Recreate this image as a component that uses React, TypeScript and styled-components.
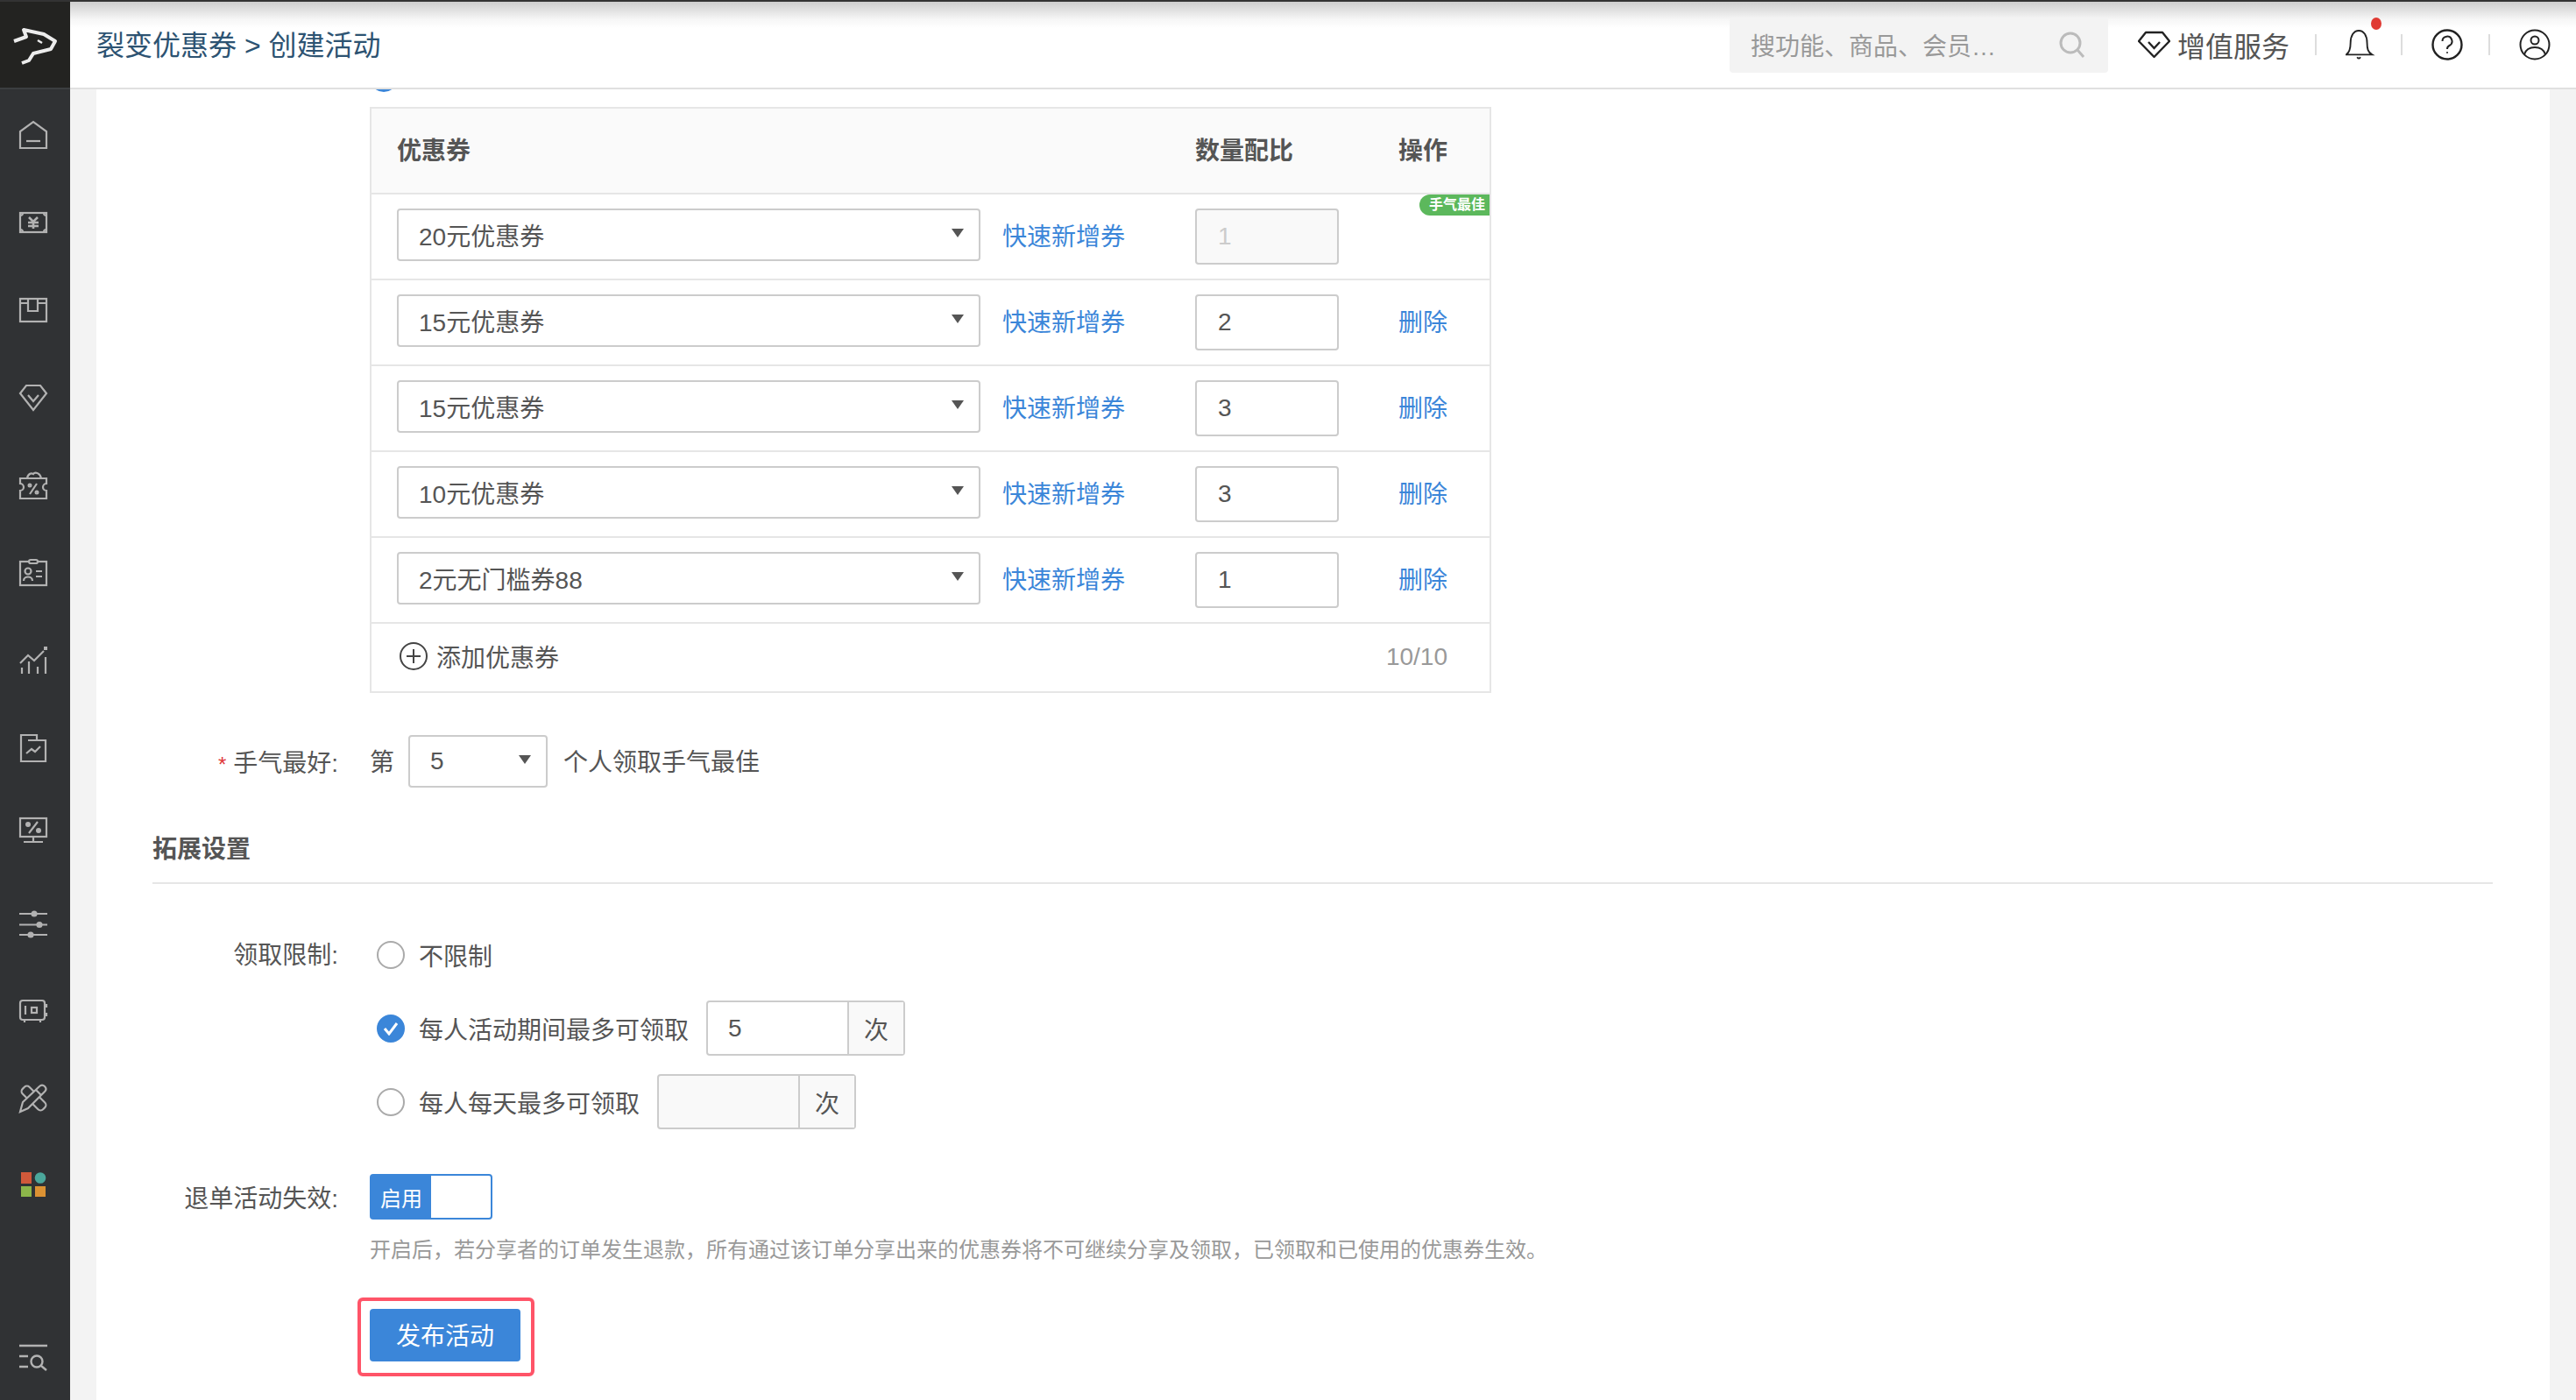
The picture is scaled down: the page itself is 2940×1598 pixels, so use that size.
import React from "react";
import styled, { createGlobalStyle } from "styled-components";

const GlobalStyle = createGlobalStyle`
  html, body {
    margin: 0;
    padding: 0;
    background: #f3f3f3;
  }
  body {
    font-family: "Liberation Sans", "Noto Sans CJK SC", sans-serif;
    font-size: 28px;
    color: #555;
  }
  * {
    box-sizing: border-box;
  }
`;

const Shell = styled.div`
  display: flex;
  width: 2940px;
  height: 1598px;
  overflow: hidden;
  border-top: 2px solid #333;
`;

const Sidebar = styled.aside`
  display: flex;
  flex-direction: column;
  flex: 0 0 80px;
  background: #303234;
`;

const LogoBox = styled.div`
  display: flex;
  align-items: center;
  justify-content: center;
  height: 98px;
  margin-bottom: 4px;
  padding-top: 6px;
  background: #232321;
  box-shadow: 0 2px 0 #3c3e40;
`;

const SideItem = styled.div<{ $last?: boolean }>`
  display: flex;
  align-items: center;
  justify-content: center;
  flex: 0 0 ${(props) => (props.$last ? "94px" : "100px")};
  padding-right: 4px;
  padding-bottom: ${(props) => (props.$last ? "6px" : "0")};
  margin-top: ${(props) => (props.$last ? "auto" : "0")};
`;

const SideIcon = styled.svg`
  width: 32px;
  height: 32px;
  overflow: visible;
  fill: none;
  stroke: #b2b2b2;
  stroke-width: 2.2;
`;

const Main = styled.div`
  display: flex;
  flex-direction: column;
  flex: 1;
  min-width: 0;
`;

const Header = styled.header`
  display: flex;
  align-items: center;
  flex: 0 0 100px;
  padding: 0 29px 0 30px;
  background: linear-gradient(#cdcdcd 0, #f6f6f6 20px, #fff 30px);
  border-bottom: 2px solid #e0e0e0;
`;

const Breadcrumb = styled.div`
  padding-bottom: 4px;
  font-size: 32px;
  color: #2d5372;
`;

const SearchBox = styled.div`
  display: flex;
  align-items: center;
  justify-content: space-between;
  width: 432px;
  height: 63px;
  margin-left: auto;
  padding: 0 26px 0 24px;
  background: #f3f3f3;
  border-radius: 4px;
  color: #999;
`;

const VipLink = styled.div`
  display: flex;
  align-items: center;
  gap: 8px;
  margin-left: 34px;
  font-size: 32px;
  color: #555;
`;

const HeaderDivider = styled.span`
  width: 2px;
  height: 24px;
  margin: 0 33px 0 29px;
  background: #ddd;
`;

const HeaderIcon = styled.div<{ $width?: string }>`
  position: relative;
  display: flex;
  width: ${(props) => props.$width || "36px"};
  height: 36px;
`;

const RedDot = styled.span`
  position: absolute;
  top: -13px;
  left: 29px;
  width: 12px;
  height: 14px;
  border-radius: 50%;
  background: #e03a33;
`;

const Body = styled.div`
  flex: 1;
  min-height: 0;
  padding: 0 30px;
  background: #f3f3f3;
`;

const Card = styled.main`
  height: 100%;
  padding-right: 65px;
  overflow: hidden;
  background: #fff;
`;

const Sliver = styled.div`
  height: 3px;
  margin-left: 312px;
  overflow: hidden;
`;

const SliverDot = styled.div`
  width: 32px;
  height: 32px;
  margin-top: -29px;
  border-radius: 50%;
  background: #3b86d9;
`;

const CouponTable = styled.div`
  width: 1280px;
  margin: 17px 0 0 312px;
  border: 2px solid #e6e6e6;
`;

const TableRow = styled.div<{ $head?: boolean }>`
  position: relative;
  display: grid;
  grid-template-columns: 666px 245px 232px auto;
  align-items: ${(props) => (props.$head ? "center" : "start")};
  height: 98px;
  padding: ${(props) => (props.$head ? "0 0 4px 29px" : "16px 0 0 29px")};
  background: ${(props) => (props.$head ? "#fafafa" : "#fff")};
  border-bottom: 2px solid #e6e6e6;
`;

const HeadCell = styled.div`
  font-weight: 700;
  color: #555;
`;

const Select = styled.div<{ $width: string }>`
  display: flex;
  align-items: center;
  justify-content: space-between;
  width: ${(props) => props.$width};
  height: 60px;
  padding: 0 17px 0 23px;
  border: 2px solid #ccc;
  border-radius: 4px;
  background: #fff;
  color: #555;
`;

const Caret = styled.span`
  width: 0;
  height: 0;
  margin-top: -5px;
  border-left: 7px solid transparent;
  border-right: 7px solid transparent;
  border-top: 10px solid #555;
`;

const Link = styled.a`
  display: flex;
  align-items: center;
  height: 60px;
  margin-left: 25px;
  color: #3b86d9;
`;

const DeleteLink = styled(Link)`
  margin-left: 0;
`;

const RatioInput = styled.div<{ $disabled?: boolean }>`
  display: flex;
  align-items: center;
  width: 164px;
  height: 64px;
  padding-left: 24px;
  border: 2px solid #ccc;
  border-radius: 4px;
  background: ${(props) => (props.$disabled ? "#f9f9f9" : "#fff")};
  color: ${(props) => (props.$disabled ? "#ccc" : "#555")};
`;

const LuckyBadge = styled.span`
  position: absolute;
  top: 0;
  right: 0;
  width: 80px;
  height: 24px;
  padding-left: 11px;
  border-radius: 12px 0 0 12px;
  background: #5cb85c;
  color: #fff;
  font-size: 16px;
  font-weight: 700;
  line-height: 24px;
  white-space: nowrap;
`;

const TableFooter = styled.div`
  display: flex;
  align-items: center;
  justify-content: space-between;
  height: 77px;
  padding: 0 48px 2px 32px;
`;

const AddCoupon = styled.div`
  display: flex;
  align-items: center;
  gap: 10px;
  padding-bottom: 2px;
`;

const PlusIcon = styled.svg`
  width: 32px;
  height: 32px;
  fill: none;
  stroke: #444;
  stroke-width: 2;
`;

const Counter = styled.span`
  color: #999;
`;

const FormRow = styled.div<{ $top: string; $height: string }>`
  display: grid;
  grid-template-columns: 276px auto;
  column-gap: 36px;
  align-items: center;
  height: ${(props) => props.$height};
  margin-top: ${(props) => props.$top};
`;

const FieldLabel = styled.label<{ $lift?: string }>`
  padding-bottom: ${(props) => props.$lift || "0"};
  text-align: right;
  color: #555;
`;

const Required = styled.span`
  margin-right: 8px;
  color: #e0393a;
  font-size: 24px;
`;

const Inline = styled.div`
  display: flex;
  align-items: center;
  gap: 16px;
`;

const InlineText = styled.span<{ $gap?: string }>`
  margin: 0 0 3px ${(props) => props.$gap || "0"};
`;

const SectionTitle = styled.h3`
  margin: 51px 0 0 64px;
  padding-bottom: 17px;
  border-bottom: 2px solid #e6e6e6;
  font-size: 28px;
  font-weight: 700;
  line-height: 40px;
  color: #555;
`;

const RadioLine = styled.div`
  display: flex;
  align-items: center;
  padding-left: 8px;
`;

const Radio = styled.span<{ $checked?: boolean }>`
  display: flex;
  align-items: center;
  justify-content: center;
  width: 32px;
  height: 32px;
  margin-right: 16px;
  border-radius: 50%;
  border: 2px solid ${(props) => (props.$checked ? "#3b86d9" : "#aaa")};
  background: ${(props) => (props.$checked ? "#3b86d9" : "#fff")};
`;

const InputGroup = styled.div<{ $disabled?: boolean }>`
  display: flex;
  width: 227px;
  height: 63px;
  margin-left: 20px;
  border: 2px solid #ccc;
  border-radius: 4px;
  background: ${(props) => (props.$disabled ? "#f9f9f9" : "#fff")};
`;

const GroupValue = styled.div`
  display: flex;
  align-items: center;
  flex: 1;
  padding-left: 23px;
`;

const GroupAddon = styled.div`
  display: flex;
  align-items: center;
  justify-content: center;
  flex: 0 0 64px;
  border-left: 2px solid #ccc;
  background: #f9f9f9;
`;

const Toggle = styled.div`
  display: flex;
  width: 140px;
  height: 52px;
  border: 2px solid #3b86d9;
  border-radius: 4px;
  background: #fff;
`;

const ToggleOn = styled.span`
  display: flex;
  align-items: center;
  justify-content: center;
  flex: 0 0 68px;
  background: #3b86d9;
  color: #fff;
  font-size: 24px;
`;

const HelpText = styled.p`
  margin: 18px 0 0 312px;
  font-size: 24px;
  line-height: 34px;
  color: #999;
  white-space: nowrap;
`;

const Highlight = styled.div`
  display: inline-block;
  margin: 37px 0 0 298px;
  padding: 9px 12px 13px 10px;
  border: 4px solid #ff5468;
  border-radius: 6px;
`;

const PublishButton = styled.button`
  display: block;
  width: 172px;
  height: 60px;
  padding: 0 0 3px;
  border: 0;
  border-radius: 4px;
  background: #3b86d9;
  color: #fff;
  font: inherit;
`;

const rows = [
  { name: "15元优惠券", qty: "2" },
  { name: "15元优惠券", qty: "3" },
  { name: "10元优惠券", qty: "3" },
  { name: "2元无门槛券88", qty: "1" },
];

const FoxLogo = () => (
  <svg width="80" height="80" viewBox="0 0 80 80" fill="none" stroke="#ececec" strokeWidth="4" strokeLinejoin="round">
    <path d="M16 33L30 28L27 20L50 25L63 33L58 42L38 47L33 55L25 58" />
    <path d="M43 32l5 3" strokeWidth="2.500" />
  </svg>
);

const App = () => {
  return (
    <>
      <GlobalStyle />
      <Shell>
        <Sidebar>
          <LogoBox>
            <FoxLogo />
          </LogoBox>
          <SideItem>
            <SideIcon viewBox="0 0 32 32">
              <path d="M1 31V12L16 1l15 11v19Z" />
              <path d="M8 23h16" />
            </SideIcon>
          </SideItem>
          <SideItem>
            <SideIcon viewBox="0 0 32 32">
              <rect x="1" y="5" width="30" height="22" />
              <path d="M4 5a3 3 0 0 1-3 3M28 5a3 3 0 0 0 3 3M4 27a3 3 0 0 0-3-3M28 27a3 3 0 0 1 3-3" />
              <path d="M11 10l5 5 5-5M10 16h12M10 20h12M16 15v8" strokeWidth="2.6" />
            </SideIcon>
          </SideItem>
          <SideItem>
            <SideIcon viewBox="0 0 32 32">
              <rect x="1" y="3" width="30" height="26" />
              <path d="M1 8h9M21 8h10M10 3v14h11V3" />
            </SideIcon>
          </SideItem>
          <SideItem>
            <SideIcon viewBox="0 0 32 32">
              <path d="M8 2h16l7 9-15 19L1 11Z" />
              <path d="M10 13l6 7 6-7" />
            </SideIcon>
          </SideItem>
          <SideItem>
            <SideIcon viewBox="0 0 32 32">
              <path d="M1 8h30v6a4 4 0 0 0 0 8v9H1v-9a4 4 0 0 0 0-8Z" />
              <path d="M9 8c1-6 5-6 7-5 2-3 8-1 9 5" />
              <path d="M12 26l8-12" />
              <circle cx="12" cy="16" r="1.4" />
              <circle cx="20" cy="24" r="1.4" />
            </SideIcon>
          </SideItem>
          <SideItem>
            <SideIcon viewBox="0 0 32 32">
              <rect x="1" y="3" width="30" height="27" />
              <rect x="11" y="1" width="10" height="4" rx="2" fill="#303234" />
              <circle cx="10" cy="14" r="3.5" />
              <path d="M5 25c0-6 10-6 10 0M19 14h7M19 20h7" />
            </SideIcon>
          </SideItem>
          <SideItem>
            <SideIcon viewBox="0 0 32 32">
              <path d="M1 19l9-9 7 6 11-11" />
              <rect x="28" y="0" width="4" height="4" fill="#b2b2b2" stroke="none" />
              <path d="M3 24v7M11 17v14M21 23v8M30 12v19" />
            </SideIcon>
          </SideItem>
          <SideItem>
            <SideIcon viewBox="0 0 32 32">
              <path d="M2 31V1h18v6h10v24Z" />
              <path d="M10 7h10M8 22l6-5 4 3 6-6" />
            </SideIcon>
          </SideItem>
          <SideItem>
            <SideIcon viewBox="0 5 32 32">
              <rect x="1" y="1" width="30" height="21" />
              <path d="M16 22v5M5 28h22M11 18L21 5" />
              <circle cx="10" cy="8" r="3" fill="#b2b2b2" stroke="none" />
              <circle cx="22" cy="15" r="3" fill="#b2b2b2" stroke="none" />
            </SideIcon>
          </SideItem>
          <SideItem>
            <SideIcon viewBox="0 0 32 32">
              <path d="M0 5h32M0 17.500h32M0 29h32" />
              <circle cx="17" cy="5" r="2.500" fill="#b2b2b2" />
              <circle cx="23" cy="17.500" r="2.500" fill="#b2b2b2" />
              <circle cx="13" cy="29" r="2.500" fill="#b2b2b2" />
            </SideIcon>
          </SideItem>
          <SideItem>
            <SideIcon viewBox="0 0 32 32">
              <rect x="1" y="4" width="28" height="22" rx="3" />
              <path d="M7 10v10M31 8v4M31 18v4M6 26v3M24 26v3" />
              <rect x="14" y="12" width="6" height="6" />
            </SideIcon>
          </SideItem>
          <SideItem>
            <SideIcon viewBox="0 1 32 32" strokeWidth="2.4">
              <rect x="0" y="11" width="33" height="11" rx="4" transform="rotate(45 16.500 16.500)" />
              <path d="M1 32l3-11L23 3q3-3 6 0t0 6L10 28Z" fill="#303234" />
              <path d="M19 7l6 6" />
            </SideIcon>
          </SideItem>
          <SideItem>
            <SideIcon viewBox="0 3 32 32">
              <rect x="2" y="3" width="12" height="13" fill="#d0593a" stroke="none" />
              <circle cx="24" cy="9.500" r="6.300" fill="#4ba79b" stroke="none" />
              <rect x="2" y="19" width="12" height="12" fill="#8cb64a" stroke="none" />
              <rect x="18" y="19" width="12" height="12" fill="#dc9233" stroke="none" />
            </SideIcon>
          </SideItem>
          <SideItem $last>
            <SideIcon viewBox="0 0 32 32">
              <path d="M0 4h32M0 16h10M0 28h10" strokeWidth="2.4" />
              <circle cx="20" cy="22" r="6.500" strokeWidth="2.4" />
              <path d="M25 27l6 5" strokeWidth="2.4" />
            </SideIcon>
          </SideItem>
        </Sidebar>

        <Main>
          <Header>
            <Breadcrumb>裂变优惠券 &gt; 创建活动</Breadcrumb>
            <SearchBox>
              搜功能、商品、会员…
              <svg width="30" height="30" viewBox="0 0 30 30" fill="none" stroke="#bbb" strokeWidth="3">
                <circle cx="13" cy="13" r="11" />
                <path d="M21 21l7 8" />
              </svg>
            </SearchBox>
            <VipLink>
              <svg width="37" height="32" viewBox="0 0 37 32" fill="none" stroke="#222" strokeWidth="2.4">
                <path d="M9 2h19l8 10-17.500 18L1 12Z" strokeLinejoin="round" />
                <path d="M12 13l6.500 7 6.500-7" />
              </svg>
              增值服务
            </VipLink>
            <HeaderDivider />
            <HeaderIcon $width="34px">
              <svg width="36" height="36" viewBox="0 0 36 36" fill="none" stroke="#222" strokeWidth="2">
                <path d="M1 30c4-3 5-7 5-14 0-9 4-15 10-15s10 6 10 15c0 7 1 11 6 14Z" />
                <path d="M14 33q2 3 4 0" />
              </svg>
              <RedDot />
            </HeaderIcon>
            <HeaderDivider />
            <HeaderIcon>
              <svg width="36" height="36" viewBox="0 0 36 36" fill="none" stroke="#222" strokeWidth="2.4">
                <circle cx="18" cy="18" r="16.500" />
                <path d="M12.500 14a5.500 5.500 0 1 1 8 5c-2 1-2.500 2-2.500 4" strokeWidth="2" />
                <circle cx="18" cy="27" r="1" fill="#222" stroke="none" />
              </svg>
            </HeaderIcon>
            <HeaderDivider />
            <HeaderIcon>
              <svg width="36" height="36" viewBox="0 0 36 36" fill="none" stroke="#222" strokeWidth="2">
                <circle cx="18" cy="18" r="16.500" />
                <circle cx="18" cy="13" r="4.500" />
                <path d="M6 29c2-6 7-8 12-8s10 2 12 8" />
              </svg>
            </HeaderIcon>
          </Header>

          <Body>
            <Card>
              <Sliver>
                <SliverDot />
              </Sliver>

              <CouponTable>
                <TableRow $head>
                  <HeadCell>优惠券</HeadCell>
                  <span />
                  <HeadCell>数量配比</HeadCell>
                  <HeadCell>操作</HeadCell>
                </TableRow>
                <TableRow>
                  <Select $width="666px">
                    20元优惠券
                    <Caret />
                  </Select>
                  <Link>快速新增券</Link>
                  <RatioInput $disabled>1</RatioInput>
                  <span />
                  <LuckyBadge>手气最佳</LuckyBadge>
                </TableRow>
                {rows.map((row, i) => (
                  <TableRow key={i}>
                    <Select $width="666px">
                      {row.name}
                      <Caret />
                    </Select>
                    <Link>快速新增券</Link>
                    <RatioInput>{row.qty}</RatioInput>
                    <DeleteLink>删除</DeleteLink>
                  </TableRow>
                ))}
                <TableFooter>
                  <AddCoupon>
                    <PlusIcon viewBox="0 0 32 32">
                      <circle cx="16" cy="16" r="15" />
                      <path d="M16 8v16M8 16h16" />
                    </PlusIcon>
                    添加优惠券
                  </AddCoupon>
                  <Counter>10/10</Counter>
                </TableFooter>
              </CouponTable>

              <FormRow $top="48px" $height="60px">
                <FieldLabel>
                  <Required>*</Required>手气最好:
                </FieldLabel>
                <Inline>
                  <InlineText>第</InlineText>
                  <Select $width="159px">
                    5
                    <Caret />
                  </Select>
                  <InlineText $gap="2px">个人领取手气最佳</InlineText>
                </Inline>
              </FormRow>

              <SectionTitle>拓展设置</SectionTitle>

              <FormRow $top="49px" $height="63px">
                <FieldLabel $lift="4px">领取限制:</FieldLabel>
                <RadioLine>
                  <Radio />
                  不限制
                </RadioLine>
              </FormRow>
              <FormRow $top="21px" $height="63px">
                <span />
                <RadioLine>
                  <Radio $checked>
                    <svg width="18" height="16" viewBox="0 0 18 16" fill="none" stroke="#fff" strokeWidth="3">
                      <path d="M2 8l5 6 9-12" />
                    </svg>
                  </Radio>
                  每人活动期间最多可领取
                  <InputGroup>
                    <GroupValue>5</GroupValue>
                    <GroupAddon>次</GroupAddon>
                  </InputGroup>
                </RadioLine>
              </FormRow>
              <FormRow $top="21px" $height="63px">
                <span />
                <RadioLine>
                  <Radio />
                  每人每天最多可领取
                  <InputGroup $disabled>
                    <GroupValue />
                    <GroupAddon>次</GroupAddon>
                  </InputGroup>
                </RadioLine>
              </FormRow>

              <FormRow $top="51px" $height="52px">
                <FieldLabel>退单活动失效:</FieldLabel>
                <Toggle>
                  <ToggleOn>启用</ToggleOn>
                </Toggle>
              </FormRow>

              <HelpText>
                开启后，若分享者的订单发生退款，所有通过该订单分享出来的优惠券将不可继续分享及领取，已领取和已使用的优惠券生效。
              </HelpText>

              <Highlight>
                <PublishButton>发布活动</PublishButton>
              </Highlight>
            </Card>
          </Body>
        </Main>
      </Shell>
    </>
  );
};

export default App;
